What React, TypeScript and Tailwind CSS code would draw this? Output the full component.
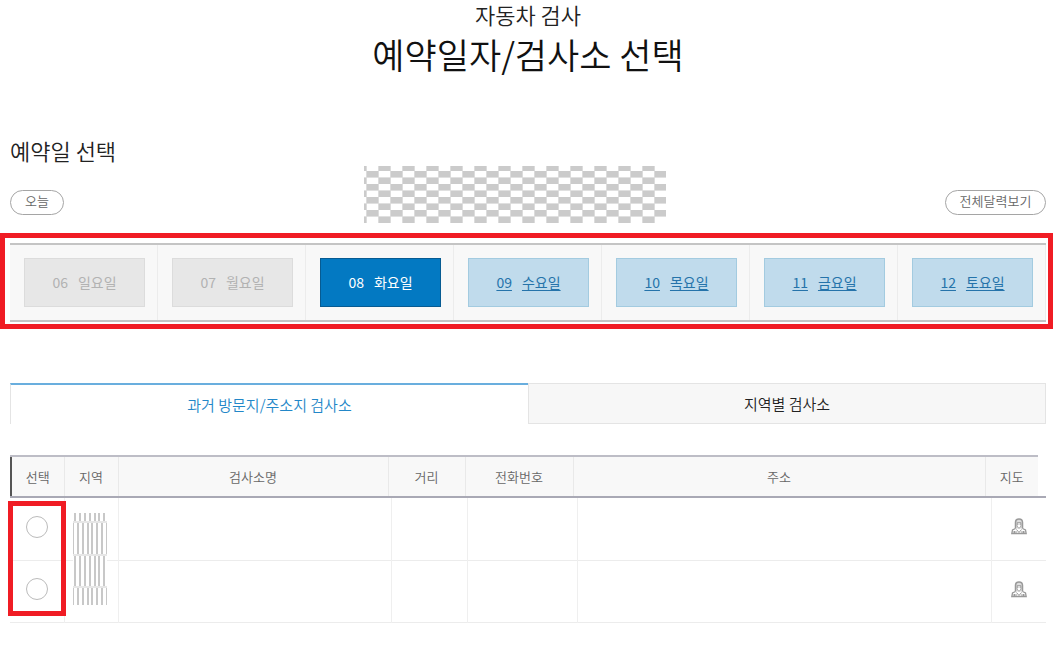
import { useState } from 'react';
import clsx from 'clsx';

const days = [
  { date: '06', name: '일요일', disabled: true },
  { date: '07', name: '월요일', disabled: true },
  { date: '08', name: '화요일', disabled: false },
  { date: '09', name: '수요일', disabled: false },
  { date: '10', name: '목요일', disabled: false },
  { date: '11', name: '금요일', disabled: false },
  { date: '12', name: '토요일', disabled: false },
];

const stations = [{ id: 'station-1' }, { id: 'station-2' }];

// Checkerboard over the hidden period text
function DateMask() {
  return (
    <svg width="302" height="57" aria-hidden="true" shapeRendering="crispEdges">
      <defs>
        <pattern id="checker" x="15" y="-1" width="24" height="13" patternUnits="userSpaceOnUse">
          <rect width="24" height="13" fill="#fff" />
          <rect width="12" height="6" fill="#cbcbcb" />
          <rect x="12" y="6" width="12" height="6" fill="#cbcbcb" />
          <rect y="12" width="24" height="1" fill="#e0e0e0" />
          <rect x="11" width="1" height="13" fill="#dcdcdc" />
          <rect x="23" width="1" height="13" fill="#dcdcdc" />
        </pattern>
      </defs>
      <rect width="302" height="57" fill="url(#checker)" />
    </svg>
  );
}

// Stripes over the hidden region names
function RegionMask() {
  const even = [1, 6, 11, 16, 21, 25, 30];
  const odd = [0, 4, 9, 14, 18, 23, 28, 33];
  const bands = [
    { y: 0, h: 8, xs: even },
    { y: 10, h: 31, xs: odd },
    { y: 43, h: 30, xs: even },
    { y: 75, h: 17, xs: odd },
  ];
  return (
    <svg width="34" height="92" aria-hidden="true" shapeRendering="crispEdges">
      <rect width="34" height="92" fill="#fff" />
      {bands.map((band) => (
        <g key={band.y}>
          {band.y > 0 && <rect y={band.y - 2} width="34" height="2" fill="#e6e6e6" />}
          {band.xs.map((x) => (
            <rect key={x} x={x} y={band.y} width={x === 0 || x === 33 ? 1 : 2} height={band.h} fill="#c8c8c8" />
          ))}
        </g>
      ))}
    </svg>
  );
}

function MapIcon() {
  return (
    <svg width="16" height="17" viewBox="0 0 16 17" fill="none" stroke="#999" aria-hidden="true">
      <path d="M4.500 10.500V4.500C4.500 2 6 1 8 1s3.500 1 3.500 3.500v6" fill="#ddd" strokeWidth="1.500" />
      <path d="M6 4.500h4V8l-2 2.500L6 8z" fill="#fff" stroke="#aaa" />
      <path d="M6.200 6h1.300M8.500 6h1.300" stroke="#777" />
      <path d="M4.500 10.500 1.500 12l-.7 3.500h14.400l-.7-3.500-3-1.500" strokeWidth="1.300" />
      <path d="M3.500 15v-2M5.500 11.500 8 14.500l2.500-3M12.500 15v-2M2 14h4M10 14h4" />
    </svg>
  );
}

export default function App() {
  const [day, setDay] = useState('08');
  const [tab, setTab] = useState(0);

  return (
    <main className="bg-white pr-[13px] pl-[10px] font-['Noto_Sans_CJK_KR','Noto_Sans',sans-serif] text-[#222]">
      <header className="text-center">
        <p className="text-[22px] leading-7 font-[350]">자동차 검사</p>
        <h1 className="text-[35px] leading-[52px] font-[350] text-[#111]">예약일자/검사소 선택</h1>
      </header>

      <section className="mt-[54px]">
        <h2 className="text-[22px] leading-8 font-[350]">예약일 선택</h2>

        <div className="grid grid-cols-[1fr_auto_1fr] items-end">
          <button className="mb-2 h-[25px] w-[54px] rounded-full border border-[#a5a5a5] pb-1 text-[13px] leading-5 font-[350] text-[#666]">
            오늘
          </button>
          <div className="pr-[26px]">
            <DateMask />
          </div>
          <button className="mb-2 h-[25px] w-[101px] justify-self-end rounded-full border border-[#a5a5a5] pb-1 text-[13px] leading-5 font-[350] text-[#666]">
            전체달력보기
          </button>
        </div>

        <div className="relative mt-5">
          <div className="grid grid-cols-7 border-y-2 border-[#c4c4c4] bg-[#f8f8f8]">
            {days.map((d) => (
              <div key={d.date} className="border-r border-[#ececec] py-[13px] pr-3 pl-[14px]">
                <button
                  disabled={d.disabled}
                  onClick={() => setDay(d.date)}
                  className={clsx(
                    'flex h-[49px] w-full items-center justify-center gap-[10px] border text-[14px]',
                    d.disabled && 'border-[#dcdcdc] bg-[#e7e7e7] text-[#b2b2b2]',
                    !d.disabled && d.date === day && 'border-[#075b92] bg-[#0379c2] text-white',
                    !d.disabled && d.date !== day && 'border-[#a3cbe0] bg-[#c0dbec] text-[#2573aa] underline underline-offset-2',
                  )}
                >
                  <span>{d.date}</span>
                  <span>{d.name}</span>
                </button>
              </div>
            ))}
          </div>
          <div className="pointer-events-none absolute -top-[10px] -right-[7px] -bottom-[7px] -left-[10px] border-5 border-[#f01c24]" />
        </div>
      </section>

      <section className="mt-[61px]">
        <div role="tablist" className="grid h-[41px] grid-cols-2 text-[15px]">
          {['과거 방문지/주소지 검사소', '지역별 검사소'].map((label, i) => (
            <button
              key={label}
              role="tab"
              aria-selected={tab === i}
              onClick={() => setTab(i)}
              className={clsx(
                'border-[#e4e4e4] pt-[2px] font-[350]',
                tab === i ? 'border-t-2 border-l border-t-[#69aede] text-[#2387c8]' : 'border bg-[#f7f7f7] text-[#222]',
              )}
            >
              {label}
            </button>
          ))}
        </div>

        {/* Head is a separate table, 8px narrower than the list below it */}
        <div className="mt-[31px] pr-2">
          <table className="w-full table-fixed border-l-2 border-[#555] text-[13px] text-[#666]">
            <thead>
              <tr className="h-[40px] border-t-2 border-t-[#bdbdc6] bg-[#f8f8f8]">
                <th className="w-[53px] border-r border-[#e9e9e9] font-[350]">선택</th>
                <th className="w-[54px] border-r border-[#e9e9e9] font-[350]">지역</th>
                <th className="w-[270px] border-r border-[#e9e9e9] font-[350]">검사소명</th>
                <th className="w-[77px] border-r border-[#e9e9e9] font-[350]">거리</th>
                <th className="w-[108px] border-r border-[#e9e9e9] font-[350]">전화번호</th>
                <th className="border-r border-[#e9e9e9] font-[350]">주소</th>
                <th className="w-[53px] font-[350]">지도</th>
              </tr>
            </thead>
          </table>
        </div>

        <div className="relative border-t-2 border-[#a9a9b5]">
          <table className="w-full table-fixed">
            <colgroup>
              <col className="w-[54px]" />
              <col className="w-[54px]" />
              <col className="w-[273px]" />
              <col className="w-[76px]" />
              <col className="w-[110px]" />
              <col />
              <col className="w-[55px]" />
            </colgroup>
            <tbody>
              {stations.map((s, i) => (
                <tr key={s.id} className="h-[62px] border-b border-[#ececec]">
                  <td className="border-r border-[#efefef] pb-1">
                    <input
                      type="radio"
                      name="station"
                      aria-label={`검사소 ${i + 1} 선택`}
                      className="mx-auto block size-[22px] appearance-none rounded-full border border-[#bbb] bg-white checked:border-[6px] checked:border-[#0379c2]"
                    />
                  </td>
                  <td className="border-r border-[#efefef]" />
                  <td className="border-r border-[#efefef]" />
                  <td className="border-r border-[#efefef]" />
                  <td className="border-r border-[#efefef]" />
                  <td className="border-r border-[#efefef]" />
                  <td className="pb-1">
                    <button aria-label="지도" className="mx-auto block">
                      <MapIcon />
                    </button>
                  </td>
                </tr>
              ))}
            </tbody>
          </table>
          <div className="absolute top-[15px] left-[63px]">
            <RegionMask />
          </div>
          <div className="pointer-events-none absolute top-[3px] -left-[2px] h-[115px] w-[58px] border-5 border-[#f01c24]" />
        </div>
      </section>
    </main>
  );
}
